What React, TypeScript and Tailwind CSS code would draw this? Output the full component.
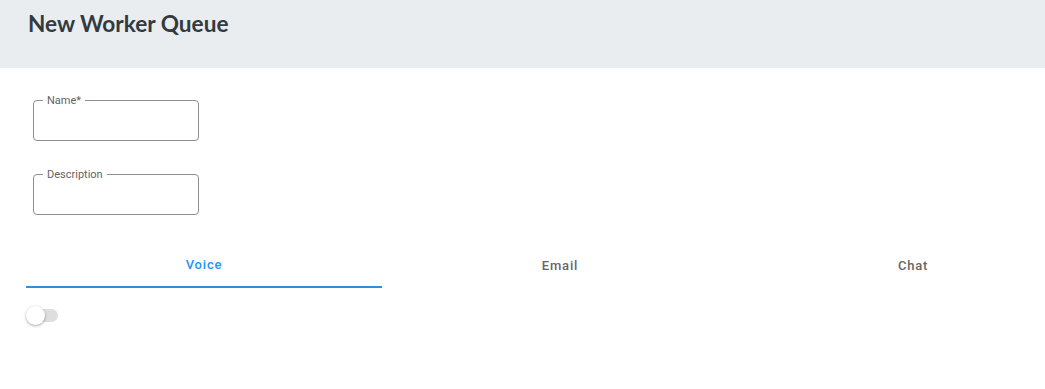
import React from "react";

function Outlined({ label }: { label: string }) {
  return (
    <div className="relative w-[166px] h-[41px] border border-[#8f8f8f] rounded-[4px]">
      <span className="absolute left-[9px] top-[-7px] px-[4px] bg-white text-[11px] leading-[13px] text-[#5f6368] font-['Roboto',sans-serif]">
        {label}
      </span>
    </div>
  );
}

export default function App() {
  return (
    <div className="w-[1045px] h-[389px] bg-white overflow-hidden font-['Roboto',sans-serif]">
      <div className="h-[68px] bg-[#e9edf0] pl-[28px] pt-[10px]">
        <h1 className="font-['Lato',sans-serif] font-bold text-[22.6px] leading-[28px] text-[#333a40]">
          New Worker Queue
        </h1>
      </div>
      <div className="pl-[33px] pt-[32px] flex flex-col gap-[33px]">
        <Outlined label="Name*" />
        <Outlined label="Description" />
      </div>
      <div className="mt-[28px] ml-[26px] flex w-[1068px]">
        <div className="w-[356px] h-[45px] flex items-center justify-center border-b-2 border-[#2d8fe0] text-[13px] font-medium tracking-[0.8px] text-[#2196f3]">
          Voice
        </div>
        <div className="w-[356px] h-[45px] flex items-center justify-center text-[13px] font-medium tracking-[0.8px] text-[#666666]">
          Email
        </div>
        <div className="w-[350px] h-[45px] flex items-center justify-center text-[13px] font-medium tracking-[0.8px] text-[#666666]">
          Chat
        </div>
      </div>
      <div className="ml-[26px] mt-[17px] relative w-[34px] h-[20px] flex items-center">
        <div className="absolute left-[2px] w-[30px] h-[13px] rounded-full bg-[#dedede]" />
        <div className="absolute left-0 w-[19px] h-[19px] rounded-full bg-white shadow-[0_1px_3px_rgba(0,0,0,0.35)]" />
      </div>
    </div>
  );
}
